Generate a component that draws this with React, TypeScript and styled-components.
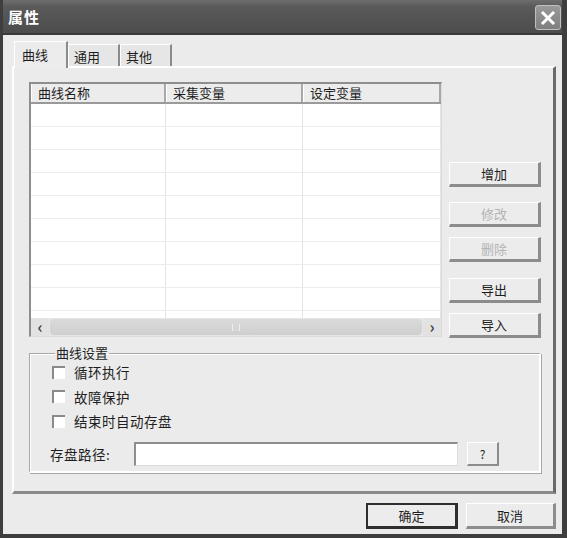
import styled, { createGlobalStyle } from "styled-components";

const GlobalStyle = createGlobalStyle`
  html, body {
    margin: 0;
    padding: 0;
    background: #ffffff;
  }
  * {
    box-sizing: border-box;
  }
`;

const columns = ["曲线名称", "采集变量", "设定变量"];
const rows = Array.from({ length: 10 }, (_, i) => i);
const options = ["循环执行", "故障保护", "结束时自动存盘"];

const App = () => {
  return (
    <>
      <GlobalStyle />
      <Window>
        <TitleBar>
          <TitleText>属性</TitleText>
          <CloseButton>
            <svg width="16" height="16" viewBox="0 0 16 16">
              <path
                d="M3 3 L13 13 M13 3 L3 13"
                stroke="#ffffff"
                strokeWidth="3"
                strokeLinecap="square"
              />
            </svg>
          </CloseButton>
        </TitleBar>

        <Body>
          <TabRow>
            <Tab $active>曲线</Tab>
            <Tab>通用</Tab>
            <Tab>其他</Tab>
          </TabRow>

          <Panel>
            <TopRow>
              <ListView>
                <HeaderRow>
                  {columns.map((c) => (
                    <HeaderCell key={c}>{c}</HeaderCell>
                  ))}
                </HeaderRow>
                <Rows>
                  {rows.map((r) => (
                    <Row key={r}>
                      <Cell />
                      <Cell />
                      <Cell />
                    </Row>
                  ))}
                </Rows>
                <ScrollBar>
                  <ArrowBox>‹</ArrowBox>
                  <Thumb>
                    <Grip />
                  </Thumb>
                  <ArrowBox>›</ArrowBox>
                </ScrollBar>
              </ListView>

              <ButtonColumn>
                <SideButton $mt={80}>增加</SideButton>
                <SideButton $mt={15} $disabled>
                  修改
                </SideButton>
                <SideButton $mt={10} $disabled>
                  删除
                </SideButton>
                <SideButton $mt={16}>导出</SideButton>
                <SideButton $mt={10}>导入</SideButton>
              </ButtonColumn>
            </TopRow>

            <GroupBox>
              <GroupLegend>曲线设置</GroupLegend>
              {options.map((o) => (
                <CheckRow key={o}>
                  <CheckBox />
                  <span>{o}</span>
                </CheckRow>
              ))}
              <PathRow>
                <PathLabel>存盘路径:</PathLabel>
                <PathInput />
                <SmallButton>?</SmallButton>
              </PathRow>
            </GroupBox>
          </Panel>

          <Footer>
            <DialogButton $default>确定</DialogButton>
            <DialogButton>取消</DialogButton>
          </Footer>
        </Body>
      </Window>
    </>
  );
};

export default App;

const Window = styled.div`
  width: 567px;
  height: 538px;
  display: flex;
  flex-direction: column;
  background-color: #ebebeb;
  border-left: 3px solid #3e3e3e;
  border-right: 5px solid #3e3e3e;
  border-bottom: 4px solid #3e3e3e;
  font-family: "Noto Sans CJK SC", "Liberation Sans", sans-serif;
  font-size: 13px;
  color: #1e1e1e;
  overflow: hidden;
`;

const TitleBar = styled.div`
  height: 35px;
  flex-shrink: 0;
  margin-left: -3px;
  margin-right: -5px;
  padding: 0 6px 0 8px;
  display: flex;
  align-items: center;
  justify-content: space-between;
  background: linear-gradient(#6e6e6e 0%, #5a5a5a 20%, #4c4c4c 100%);
  border-bottom: 2px solid #3a3a3a;
`;

const TitleText = styled.div`
  color: #ffffff;
  font-weight: 700;
  font-size: 15px;
  letter-spacing: 1px;
`;

const CloseButton = styled.div`
  width: 26px;
  height: 25px;
  margin-top: 2px;
  display: flex;
  justify-content: center;
  align-items: center;
  background: linear-gradient(#9a9a9a, #7e7e7e);
  border: 1px solid #c0c0c0;
  border-radius: 3px;
`;

const Body = styled.div`
  flex: 1;
  display: flex;
  flex-direction: column;
  padding: 4px 6px 0 9px;
`;

const TabRow = styled.div`
  display: flex;
  align-items: flex-end;
  height: 27px;
  padding-left: 2px;
`;

const Tab = styled.div<{ $active?: boolean }>`
  height: ${(p) => (p.$active ? "27px" : "22px")};
  width: ${(p) => (p.$active ? "54px" : "52px")};
  padding-left: ${(p) => (p.$active ? "7px" : "5px")};
  padding-top: ${(p) => (p.$active ? "3px" : "2px")};
  background-color: ${(p) => (p.$active ? "#ececec" : "#e6e6e6")};
  border-top: 1px solid #ffffff;
  border-left: 1px solid #ffffff;
  border-right: 2px solid #8a8a8a;
  margin-bottom: ${(p) => (p.$active ? "-2px" : "0")};
  position: relative;
  z-index: ${(p) => (p.$active ? 1 : 0)};
  font-size: 13px;
`;

const Panel = styled.div`
  height: 428px;
  display: flex;
  flex-direction: column;
  padding: 14px 12px 0 15px;
  background-color: #ebebeb;
  border-top: 2px solid #ffffff;
  border-left: 2px solid #ffffff;
  border-right: 3px solid #6a6a6a;
  border-bottom: 3px solid #8a8a8a;
`;

const TopRow = styled.div`
  display: flex;
  gap: 7px;
`;

const ListView = styled.div`
  width: 413px;
  height: 255px;
  display: flex;
  flex-direction: column;
  background-color: #ffffff;
  border-top: 2px solid #8e8e8e;
  border-left: 2px solid #8e8e8e;
  border-right: 1px solid #dcdcdc;
  border-bottom: 1px solid #dcdcdc;
`;

const HeaderRow = styled.div`
  height: 20px;
  flex-shrink: 0;
  display: grid;
  grid-template-columns: 135px 137px 1fr;
  background-color: #ececec;
  border-bottom: 2px solid #9a9a9a;
`;

const HeaderCell = styled.div`
  padding-left: 6px;
  line-height: 18px;
  font-size: 13px;
  border-right: 2px solid #a8a8a8;
  border-left: 1px solid #ffffff;
`;

const Rows = styled.div`
  flex: 1;
  overflow: hidden;
`;

const Row = styled.div`
  height: 23px;
  display: grid;
  grid-template-columns: 135px 137px 1fr;
  border-bottom: 1px solid #ececec;
`;

const Cell = styled.div`
  border-right: 1px solid #e4e4e4;
`;

const ScrollBar = styled.div`
  height: 18px;
  flex-shrink: 0;
  display: flex;
  background-color: #e6e6e6;
`;

const ArrowBox = styled.div`
  width: 18px;
  height: 18px;
  display: flex;
  justify-content: center;
  align-items: center;
  background-color: #e2e2e2;
  color: #444444;
  font-size: 16px;
  font-weight: 700;
  line-height: 1;
  padding-bottom: 2px;
`;

const Thumb = styled.div`
  flex: 1;
  margin: 1px 1px;
  display: flex;
  justify-content: center;
  align-items: center;
  background: linear-gradient(#dadada, #cfcfcf);
  border-radius: 4px;
`;

const Grip = styled.div`
  width: 8px;
  height: 7px;
  border-left: 1px solid #eeeeee;
  border-right: 1px solid #eeeeee;
  background-color: #d6d6d6;
`;

const ButtonColumn = styled.div`
  display: flex;
  flex-direction: column;
`;

const SideButton = styled.div<{ $mt: number; $disabled?: boolean }>`
  width: 92px;
  height: 25px;
  margin-top: ${(p) => p.$mt}px;
  display: flex;
  justify-content: center;
  align-items: center;
  background-color: #ececec;
  border-top: 1px solid #ffffff;
  border-left: 1px solid #ffffff;
  border-right: 3px solid #8c8c8c;
  border-bottom: 3px solid #8c8c8c;
  color: ${(p) => (p.$disabled ? "#b4b4b4" : "#1e1e1e")};
  font-size: 13px;
`;

const GroupBox = styled.fieldset`
  margin: 8px 0 0 0;
  width: 512px;
  height: 127px;
  padding: 0 0 0 22px;
  border: none;
  border-top: 1px solid #a8a8a8;
  border-left: 1px solid #a8a8a8;
  border-right: 2px solid #ffffff;
  border-bottom: 2px solid #ffffff;
  box-shadow: inset 1px 1px 0 #ffffff, 1px 1px 0 #a8a8a8;
  display: flex;
  flex-direction: column;
`;

const GroupLegend = styled.legend`
  padding: 0 1px;
  margin-left: 3px;
  font-size: 13px;
  line-height: 14px;
`;

const CheckRow = styled.div`
  height: 24.5px;
  display: flex;
  align-items: center;
  gap: 9px;
  font-size: 13.5px;
  letter-spacing: 0.5px;
`;

const CheckBox = styled.div`
  width: 13px;
  height: 13px;
  background-color: #ffffff;
  border-top: 2px solid #8a8a8a;
  border-left: 2px solid #8a8a8a;
`;

const PathRow = styled.div`
  margin-top: 8px;
  margin-left: -2px;
  display: flex;
  align-items: center;
  height: 25px;
`;

const PathLabel = styled.div`
  width: 84px;
  font-size: 13.5px;
  letter-spacing: 0.5px;
`;

const PathInput = styled.div`
  width: 324px;
  height: 24px;
  background-color: #ffffff;
  border-top: 2px solid #8e8e8e;
  border-left: 2px solid #8e8e8e;
  border-right: 1px solid #dcdcdc;
  border-bottom: 1px solid #dcdcdc;
`;

const SmallButton = styled.div`
  width: 32px;
  height: 24px;
  margin-left: 9px;
  display: flex;
  justify-content: center;
  align-items: center;
  background-color: #ececec;
  border-top: 1px solid #ffffff;
  border-left: 1px solid #ffffff;
  border-right: 2px solid #8c8c8c;
  border-bottom: 2px solid #8c8c8c;
  font-size: 12px;
`;

const Footer = styled.div`
  display: flex;
  justify-content: flex-end;
  gap: 8px;
  padding-top: 9px;
  padding-right: 0;
`;

const DialogButton = styled.div<{ $default?: boolean }>`
  width: ${(p) => (p.$default ? "92px" : "90px")};
  height: 26px;
  display: flex;
  justify-content: center;
  align-items: center;
  background-color: #ececec;
  border-top: ${(p) => (p.$default ? "2px solid #2e2e2e" : "1px solid #ffffff")};
  border-left: ${(p) => (p.$default ? "2px solid #2e2e2e" : "1px solid #ffffff")};
  border-right: ${(p) => (p.$default ? "3px solid #2e2e2e" : "3px solid #8c8c8c")};
  border-bottom: ${(p) => (p.$default ? "3px solid #2e2e2e" : "3px solid #8c8c8c")};
  font-size: 13px;
`;
